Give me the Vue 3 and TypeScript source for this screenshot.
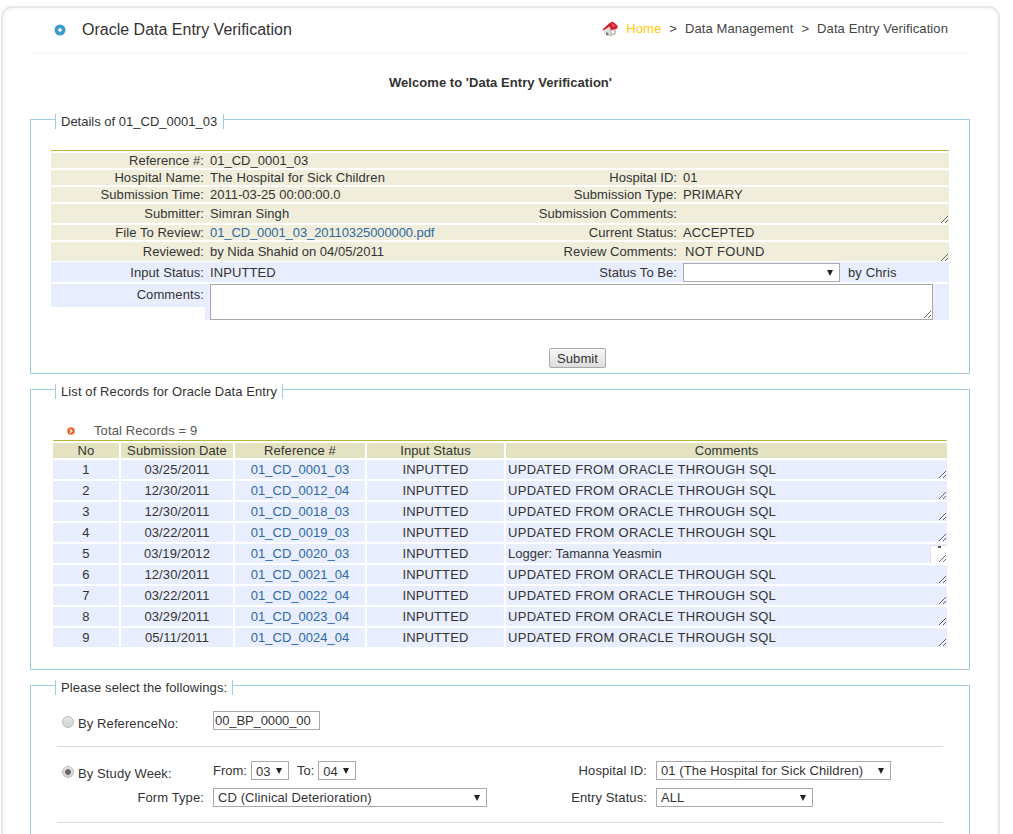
<script setup lang="ts">
type RecordRow = {
  no: number
  date: string
  ref: string
  comment: string
  scrolled?: boolean
}

const updated = 'UPDATED FROM ORACLE THROUGH SQL'

const records: RecordRow[] = [
  { no: 1, date: '03/25/2011', ref: '01_CD_0001_03', comment: updated },
  { no: 2, date: '12/30/2011', ref: '01_CD_0012_04', comment: updated },
  { no: 3, date: '12/30/2011', ref: '01_CD_0018_03', comment: updated },
  { no: 4, date: '03/22/2011', ref: '01_CD_0019_03', comment: updated },
  { no: 5, date: '03/19/2012', ref: '01_CD_0020_03', comment: 'Logger: Tamanna Yeasmin', scrolled: true },
  { no: 6, date: '12/30/2011', ref: '01_CD_0021_04', comment: updated },
  { no: 7, date: '03/22/2011', ref: '01_CD_0022_04', comment: updated },
  { no: 8, date: '03/29/2011', ref: '01_CD_0023_04', comment: updated },
  { no: 9, date: '05/11/2011', ref: '01_CD_0024_04', comment: updated },
]
</script>

<template>
  <div class="card">
    <header class="top">
      <div class="title">
        <svg class="title__icon" width="12" height="12" viewBox="0 0 12 12">
          <circle cx="6" cy="6" r="5.5" fill="#3f9ac9" />
          <circle cx="6" cy="6" r="1.8" fill="#fff" />
        </svg>
        <span>Oracle Data Entry Verification</span>
      </div>
      <nav class="crumbs">
        <svg width="16" height="16" viewBox="0 0 16 16">
          <path d="M2 8 V13 L8 15.5 L14 13 V7 L8 3 Z" fill="#e2ded8" />
          <path d="M8 8 L14 7 V13 L8 15.5 Z" fill="#c9c4bc" />
          <path d="M4 11 L6.5 12 V15 L4 14 Z" fill="#8f7f78" />
          <path d="M0.5 8.5 L7 2.5 L10.5 0.5 L15.5 4.5 L15.5 7.5 L9 9 L7.5 5.5 L1.5 9.5 Z" fill="#cf1f2e" />
          <path d="M9.5 2 L14.5 5 L10 6 Z" fill="#e8505a" />
          <rect x="9.5" y="9.5" width="2.5" height="2.5" fill="#fff" />
        </svg>
        <a class="crumbs__home">Home</a>
        <span class="crumbs__sep">&gt;</span>
        <span>Data Management</span>
        <span class="crumbs__sep">&gt;</span>
        <span>Data Entry Verification</span>
      </nav>
    </header>

    <h1 class="welcome">Welcome to 'Data Entry Verification'</h1>

    <section class="box box--details">
      <div class="box__legend">Details of 01_CD_0001_03</div>
      <div class="details">
        <div class="row">
          <span class="lbl">Reference #:</span><span class="val val--num">01_CD_0001_03</span>
          <span class="lbl"></span><span class="val"></span>
        </div>
        <div class="row">
          <span class="lbl">Hospital Name:</span><span class="val">The Hospital for Sick Children</span>
          <span class="lbl">Hospital ID:</span><span class="val">01</span>
        </div>
        <div class="row">
          <span class="lbl">Submission Time:</span><span class="val val--num">2011-03-25 00:00:00.0</span>
          <span class="lbl">Submission Type:</span><span class="val">PRIMARY</span>
        </div>
        <div class="row row--tall">
          <span class="lbl">Submitter:</span><span class="val">Simran Singh</span>
          <span class="lbl">Submission Comments:</span>
          <textarea class="note" readonly></textarea>
        </div>
        <div class="row">
          <span class="lbl">File To Review:</span>
          <a class="val link">01_CD_0001_03_20110325000000.pdf</a>
          <span class="lbl">Current Status:</span><span class="val">ACCEPTED</span>
        </div>
        <div class="row row--tall">
          <span class="lbl">Reviewed:</span><span class="val val--num">by Nida Shahid on 04/05/2011</span>
          <span class="lbl">Review Comments:</span>
          <textarea class="note" readonly>NOT FOUND</textarea>
        </div>
        <div class="row row--status">
          <span class="lbl">Input Status:</span><span class="val">INPUTTED</span>
          <span class="lbl">Status To Be:</span>
          <span class="val status">
            <span class="pick pick--status"><select></select></span>
            <span>by Chris</span>
          </span>
        </div>
        <div class="comments">
          <span class="comments__lbl">Comments:</span>
          <div class="comments__val"><textarea></textarea></div>
        </div>
      </div>
      <div class="actions"><button type="button">Submit</button></div>
    </section>

    <section class="box box--list">
      <div class="box__legend">List of Records for Oracle Data Entry</div>
      <div class="total">
        <svg width="8" height="8" viewBox="0 0 8 8">
          <circle cx="4" cy="4" r="3.8" fill="#e8692a" />
          <path d="M3 2.3 L4.8 4 L3 5.7" fill="none" stroke="#fff" stroke-width="1.2" />
        </svg>
        <span>Total Records = 9</span>
      </div>
      <div class="list">
        <table>
          <colgroup>
            <col class="col-no" />
            <col class="col-date" />
            <col class="col-ref" />
            <col class="col-status" />
            <col />
          </colgroup>
          <thead>
            <tr>
              <th>No</th>
              <th>Submission Date</th>
              <th>Reference #</th>
              <th>Input Status</th>
              <th>Comments</th>
            </tr>
          </thead>
          <tbody>
            <tr v-for="item in records" :key="item.no">
              <td>{{ item.no }}</td>
              <td>{{ item.date }}</td>
              <td><a class="link">{{ item.ref }}</a></td>
              <td>INPUTTED</td>
              <td class="cell-note">
                <span v-if="item.scrolled" class="scroll-stub"></span>
                <textarea class="note" :class="{ 'note--plain': item.scrolled }" readonly :value="item.comment"></textarea>
              </td>
            </tr>
          </tbody>
        </table>
      </div>
    </section>

    <section class="box box--filter">
      <div class="box__legend">Please select the followings:</div>
      <div class="filter filter--ref">
        <label class="choice"><input type="radio" name="by" /><span>By ReferenceNo:</span></label>
        <input class="text" type="text" value="00_BP_0000_00" />
      </div>
      <div class="filter filter--week">
        <label class="choice"><input type="radio" name="by" checked /><span>By Study Week:</span></label>
        <div class="weeks">
          <span>From:</span>
          <span class="pick pick--week"><select><option>03</option></select></span>
          <span class="weeks__to">To:</span>
          <span class="pick pick--week"><select><option>04</option></select></span>
        </div>
        <span class="side-lbl">Hospital ID:</span>
        <span class="pick pick--hospital"><select><option>01 (The Hospital for Sick Children)</option></select></span>

        <span class="side-lbl">Form Type:</span>
        <span class="pick pick--form"><select><option>CD (Clinical Deterioration)</option></select></span>
        <span class="side-lbl">Entry Status:</span>
        <span class="pick pick--entry"><select><option>ALL</option></select></span>
      </div>
    </section>
  </div>
</template>

<style>
html,
body {
  height: 834px;
  overflow: hidden;
  background: #fff;
}
</style>

<style scoped>
.card {
  box-sizing: border-box;
  width: 999px;
  height: 1000px;
  margin: 6px 0 0 1px;
  border: 2px solid #e8e8e8;
  border-radius: 11px;
  box-shadow: inset 0 0 0 3px #fafafa;
  font-family: 'Liberation Sans', Arial, sans-serif;
  font-size: 13px;
  letter-spacing: 0.1px;
  color: #333;
}

.top {
  display: flex;
  justify-content: space-between;
  align-items: center;
  height: 44px;
  margin: 0 30px;
  border-bottom: 2px solid #f8f8f8;
}

.title {
  display: flex;
  align-items: center;
  gap: 16px;
  padding-left: 21px;
  font-size: 16px;
  letter-spacing: 0;
  color: #333;
}

.crumbs {
  display: flex;
  align-items: center;
  padding: 0 20px 3px 0;
  color: #444;
}

.crumbs__home {
  margin-left: 8px;
  color: #ffc90e;
}

.crumbs__sep {
  margin: 0 8px;
}

.welcome {
  margin: 21px 0 0;
  height: 15px;
  font-size: 13px;
  line-height: 15px;
  font-weight: 700;
  letter-spacing: 0.05px;
  text-align: center;
}

.box {
  position: relative;
  box-sizing: border-box;
  width: 940px;
  margin-left: 27px;
  border: 1px solid #9fcee4;
}

.box--details {
  margin-top: 29px;
  height: 255px;
  padding: 30px 20px 0;
}

.box--list {
  margin-top: 15px;
  height: 281px;
  padding: 33px 22px 0;
}

.box--filter {
  margin-top: 15px;
  height: 300px;
  padding: 25px 26px 0;
}

.box__legend {
  position: absolute;
  top: -6px;
  left: 24px;
  height: 15px;
  padding: 0 5px;
  line-height: 15px;
  background: #fff;
  border-left: 1px solid #9fcee4;
  border-right: 1px solid #9fcee4;
}

.box--details .box__legend {
  padding-right: 6px;
  letter-spacing: 0;
}

.details {
  border-top: 1px solid #b5b53c;
}

.row {
  display: grid;
  grid-template-columns: 154px 306px 167px 1fr;
  height: 15px;
  margin-top: 2px;
  line-height: 15px;
  background: #f0eedb;
}

.row--tall {
  height: 19px;
  line-height: 20px;
}

.row--status {
  height: 20px;
  margin-top: 1px;
  line-height: 21px;
  background: #e8eefd;
}

.lbl {
  padding-right: 1px;
  letter-spacing: 0.05px;
  text-align: right;
  white-space: nowrap;
}

.val {
  padding-left: 5px;
  white-space: nowrap;
}

.val--num {
  letter-spacing: 0;
}

.link {
  letter-spacing: -0.1px;
  color: #2c6aa0;
}

td .link {
  letter-spacing: 0;
}

.note {
  display: block;
  box-sizing: border-box;
  width: 100%;
  height: 100%;
  margin: 0;
  padding: 1px 2px 0;
  border: 0;
  outline: 0;
  overflow: hidden;
  background: transparent;
  font: inherit;
  letter-spacing: 0.3px;
  line-height: 18px;
  color: inherit;
}

.note--plain {
  letter-spacing: 0;
}

.row .note {
  margin-left: 5px;
  width: calc(100% - 5px);
}

.status {
  display: flex;
  align-items: flex-start;
  gap: 8px;
}

.status .pick {
  margin-top: 1px;
}

.comments {
  display: flex;
  align-items: flex-start;
  margin-top: 2px;
}

.comments__lbl {
  box-sizing: border-box;
  width: 154px;
  height: 23px;
  padding-right: 1px;
  line-height: 22px;
  text-align: right;
  background: #e8eefd;
}

.comments__val {
  flex: 1;
  height: 36px;
  padding: 0 16px 0 5px;
  background: #e8eefd;
}

.comments__val textarea {
  display: block;
  box-sizing: border-box;
  width: 100%;
  height: 36px;
  margin: 0;
  border: 1px solid #a9a9a9;
  outline: 0;
  background: #fff;
}

.actions {
  padding: 28px 0 0 498px;
}

.actions button {
  box-sizing: border-box;
  width: 57px;
  height: 20px;
  padding: 0;
  border: 1px solid #a9a9a9;
  border-radius: 2px;
  background: linear-gradient(#f8f8f8, #dddddd);
  font: inherit;
  letter-spacing: inherit;
  color: #333;
}

.total {
  display: flex;
  align-items: center;
  gap: 19px;
  height: 16px;
  padding-left: 14px;
  line-height: 16px;
  color: #555;
}

.list {
  margin-top: 1px;
  border-top: 1px solid #b5b53c;
}

table {
  table-layout: fixed;
  width: 898px;
  margin: 0 -2px;
  border-collapse: separate;
  border-spacing: 2px;
}

.col-no {
  width: 66px;
}

.col-date {
  width: 112px;
}

.col-ref {
  width: 130px;
}

.col-status {
  width: 137px;
}

th {
  height: 15px;
  padding: 0;
  font-weight: 400;
  line-height: 15px;
  background: #e3e3c1;
}

td {
  height: 19px;
  padding: 0;
  line-height: 18px;
  text-align: center;
  background: #e8eefd;
}

.cell-note {
  position: relative;
  text-align: left;
}

.scroll-stub {
  position: absolute;
  top: 1px;
  right: 0;
  bottom: 0;
  width: 16px;
  background: #fff;
  border-left: 1px solid #e0e0e0;
  border-top: 1px solid #e0e0e0;
}

.scroll-stub::before {
  content: '';
  position: absolute;
  top: 0;
  left: 7px;
  width: 3px;
  height: 2px;
  background: #555;
}

.cell-note .note {
  position: relative;
  height: 19px;
}

.filter {
  display: grid;
  grid-template-columns: 156px 274px 169px 1fr;
  align-items: start;
}

.filter--ref {
  height: 35px;
  border-bottom: 1px solid #ddd;
  width: 886px;
}

.filter--week {
  row-gap: 8px;
  grid-auto-rows: 19px;
  width: 886px;
  padding: 14px 0 15px;
  border-bottom: 1px solid #ddd;
}

.choice {
  display: flex;
  align-items: center;
  gap: 4px;
  height: 19px;
  padding: 3px 0 0 5px;
  white-space: nowrap;
}

.choice input {
  appearance: none;
  box-sizing: border-box;
  width: 12px;
  height: 12px;
  margin: -4px 0 0;
  border: 1px solid #bbb;
  border-radius: 50%;
  background: linear-gradient(#e6e6e6, #d2d2d2);
}

.choice input:checked {
  background: radial-gradient(circle, #666 0 2.5px, transparent 3.2px), linear-gradient(#e6e6e6, #d2d2d2);
}

.text {
  box-sizing: border-box;
  grid-column: 2;
  width: 107px;
  height: 19px;
  padding: 0 1px;
  border: 1px solid #a9a9a9;
  outline: 0;
  font: inherit;
  letter-spacing: -0.1px;
  color: #333;
}

.weeks {
  display: flex;
  align-items: center;
  height: 19px;
  line-height: 19px;
  letter-spacing: 0;
}

.weeks__to {
  margin-left: 8px;
}

.weeks .pick {
  margin-left: 4px;
}

.side-lbl {
  padding-right: 9px;
  line-height: 19px;
  text-align: right;
}

.pick {
  position: relative;
  display: inline-block;
  height: 19px;
}

.pick::after {
  content: '';
  position: absolute;
  top: 7px;
  right: 7px;
  border-top: 6px solid #222;
  border-left: 3px solid transparent;
  border-right: 3px solid transparent;
  pointer-events: none;
}

.pick select {
  appearance: none;
  display: block;
  box-sizing: border-box;
  width: 100%;
  height: 19px;
  margin: 0;
  padding: 0 0 0 4px;
  border: 1px solid #a9a9a9;
  border-radius: 0;
  outline: 0;
  background: #fff;
  font: inherit;
  letter-spacing: inherit;
  color: #333;
}

.pick--status {
  width: 157px;
}

.pick--week {
  width: 38px;
}

.pick--hospital {
  width: 235px;
}

.pick--form {
  width: 274px;
}

.pick--entry {
  width: 157px;
}
</style>
